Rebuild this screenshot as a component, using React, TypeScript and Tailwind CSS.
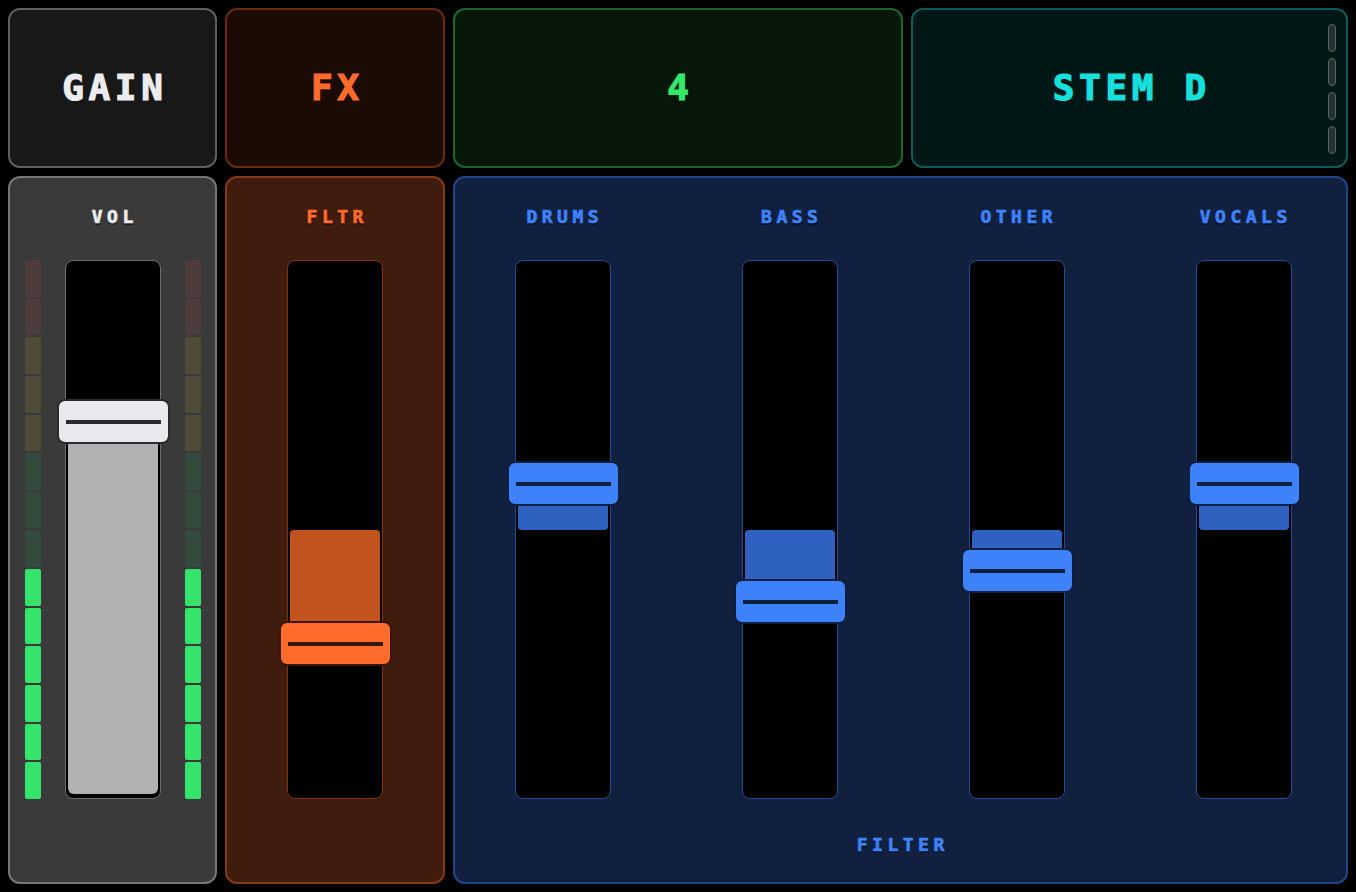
import type { ReactNode } from 'react';

const TRACK_H = 539;
const CENTER = TRACK_H / 2;

type Tone = {
  trackBorder: string;
  fill: string;
  thumb: string;
  thumbBorder: string;
  line: string;
};

const TONE_GRAY: Tone = {
  trackBorder: 'border-[#6e6e6e]',
  fill: 'bg-[#b1b2b4]',
  thumb: 'bg-[#e9eaee]',
  thumbBorder: 'border-[#2b2b2b]',
  line: 'bg-[#2a2a2a]',
};

const TONE_ORANGE: Tone = {
  trackBorder: 'border-[#7a3516]',
  fill: 'bg-[#c2521e]',
  thumb: 'bg-[#ff6b2b]',
  thumbBorder: 'border-[#3a1608]',
  line: 'bg-[#3a1608]',
};

const TONE_BLUE: Tone = {
  trackBorder: 'border-[#264a92]',
  fill: 'bg-[#2f62c0]',
  thumb: 'bg-[#3d82fb]',
  thumbBorder: 'border-[#0f1f3f]',
  line: 'bg-[#0f1f3f]',
};

// meter segments, top → bottom
const METER = [
  'bg-[#4e3b3b]',
  'bg-[#4e3b3b]',
  'bg-[#4f4b36]',
  'bg-[#4f4b36]',
  'bg-[#4f4b36]',
  'bg-[#334b3c]',
  'bg-[#334b3c]',
  'bg-[#334b3c]',
  'bg-[#35e46b]',
  'bg-[#35e46b]',
  'bg-[#35e46b]',
  'bg-[#35e46b]',
  'bg-[#35e46b]',
  'bg-[#35e46b]',
];

const STEMS = [
  { name: 'DRUMS', pos: 223 },
  { name: 'BASS', pos: 341 },
  { name: 'OTHER', pos: 310 },
  { name: 'VOCALS', pos: 223 },
];

function Label({ children, color }: { children: ReactNode; color: string }) {
  return (
    <div
      className={`h-5 pl-[0.25em] text-[18px] leading-5 font-bold tracking-[0.25em] [-webkit-text-stroke:0.7px_currentColor] [text-shadow:0_2px_0_rgba(0,0,0,0.55)] ${color}`}
    >
      {children}
    </div>
  );
}

// pos = thumb centre in px from the top of the track
function Fader({ pos, tone, mode }: { pos: number; tone: Tone; mode: 'bottom' | 'center' }) {
  let fillTop: number;
  let fillH: number;
  let round: string;
  if (mode === 'bottom') {
    fillTop = pos;
    fillH = TRACK_H - 5 - pos;
    round = 'rounded-b-md';
  } else if (pos > CENTER) {
    fillTop = CENTER;
    fillH = pos - CENTER;
    round = 'rounded-t-sm';
  } else {
    fillTop = pos;
    fillH = CENTER - pos;
    round = 'rounded-b-sm';
  }

  return (
    <div className={`relative h-[539px] w-24 rounded-lg border-[1.5px] bg-black ${tone.trackBorder}`}>
      <div
        className={`absolute right-[2px] left-[2px] ${round} ${tone.fill}`}
        style={{ top: fillTop - 1, height: fillH }}
      />
      <div
        className={`absolute -left-[9px] flex h-[45px] w-[113px] items-center justify-center rounded-lg border-2 ${tone.thumb} ${tone.thumbBorder}`}
        style={{ top: pos - 23 }}
      >
        <div className={`h-1 w-[95px] ${tone.line}`} />
      </div>
    </div>
  );
}

function Meter() {
  return (
    <div className="flex h-[539px] w-4 flex-col gap-[2px]">
      {METER.map((c, i) => (
        <div key={i} className={`flex-1 rounded-[2px] ${c}`} />
      ))}
    </div>
  );
}

function TopCard({ children, className }: { children: ReactNode; className: string }) {
  return (
    <div
      className={`relative flex items-center justify-center rounded-xl border-2 text-[36px] font-bold tracking-[0.13em] [-webkit-text-stroke:1.2px_currentColor] ${className}`}
    >
      {children}
    </div>
  );
}

export default function App() {
  return (
    <div className="grid h-[892px] w-[1356px] grid-cols-[209px_220px_450px_1fr] grid-rows-[160px_1fr] gap-2 bg-black p-2 font-['DejaVu_Sans_Mono','Liberation_Mono',monospace]">
      <TopCard className="border-[#5e5e5e] bg-[#181818] text-[#ececef]">
        <span className="pl-[0.13em]">GAIN</span>
      </TopCard>
      <TopCard className="border-[#6a2a12] bg-[#1a0b05] text-[#ff6b2b]">
        <span className="pl-[0.13em]">FX</span>
      </TopCard>
      <TopCard className="border-[#1c662b] bg-[#071709] text-[#34e86c]">
        <span className="pl-[0.13em]">4</span>
      </TopCard>
      <TopCard className="border-[#0e5a56] bg-[#011716] text-[#16e0dc]">
        <span className="pl-[0.13em]">STEM D</span>
        <div className="absolute top-[14px] right-[10px] flex flex-col gap-[6px]">
          {[0, 1, 2, 3].map((i) => (
            <div
              key={i}
              className="h-7 w-2 rounded-full border border-[#5b6462] bg-[#233230]"
            />
          ))}
        </div>
      </TopCard>

      {/* VOL */}
      <div className="flex flex-col items-center rounded-xl border-2 border-[#767676] bg-[#3a3a3a] pt-[29px]">
        <Label color="text-[#ececef]">VOL</Label>
        <div className="mt-[33px] flex gap-6">
          <Meter />
          <Fader pos={161} tone={TONE_GRAY} mode="bottom" />
          <Meter />
        </div>
      </div>

      {/* FLTR */}
      <div className="flex flex-col items-center rounded-xl border-2 border-[#873917] bg-[#3f1c0d] pt-[29px]">
        <Label color="text-[#ff6b2b]">FLTR</Label>
        <div className="mt-[33px]">
          <Fader pos={383} tone={TONE_ORANGE} mode="center" />
        </div>
      </div>

      {/* stems */}
      <div className="col-span-2 flex flex-col items-center rounded-xl border-2 border-[#22448a] bg-[#11203f] pt-[29px]">
        <div className="flex w-full justify-between pr-[46px] pl-[51px]">
          {STEMS.map((s) => (
            <div key={s.name} className="flex w-[113px] flex-col items-center">
              <Label color="text-[#3d82fb]">{s.name}</Label>
              <div className="mt-[33px]">
                <Fader pos={s.pos} tone={TONE_BLUE} mode="center" />
              </div>
            </div>
          ))}
        </div>
        <div className="mt-[36px]">
          <Label color="text-[#3d82fb]">FILTER</Label>
        </div>
      </div>
    </div>
  );
}
